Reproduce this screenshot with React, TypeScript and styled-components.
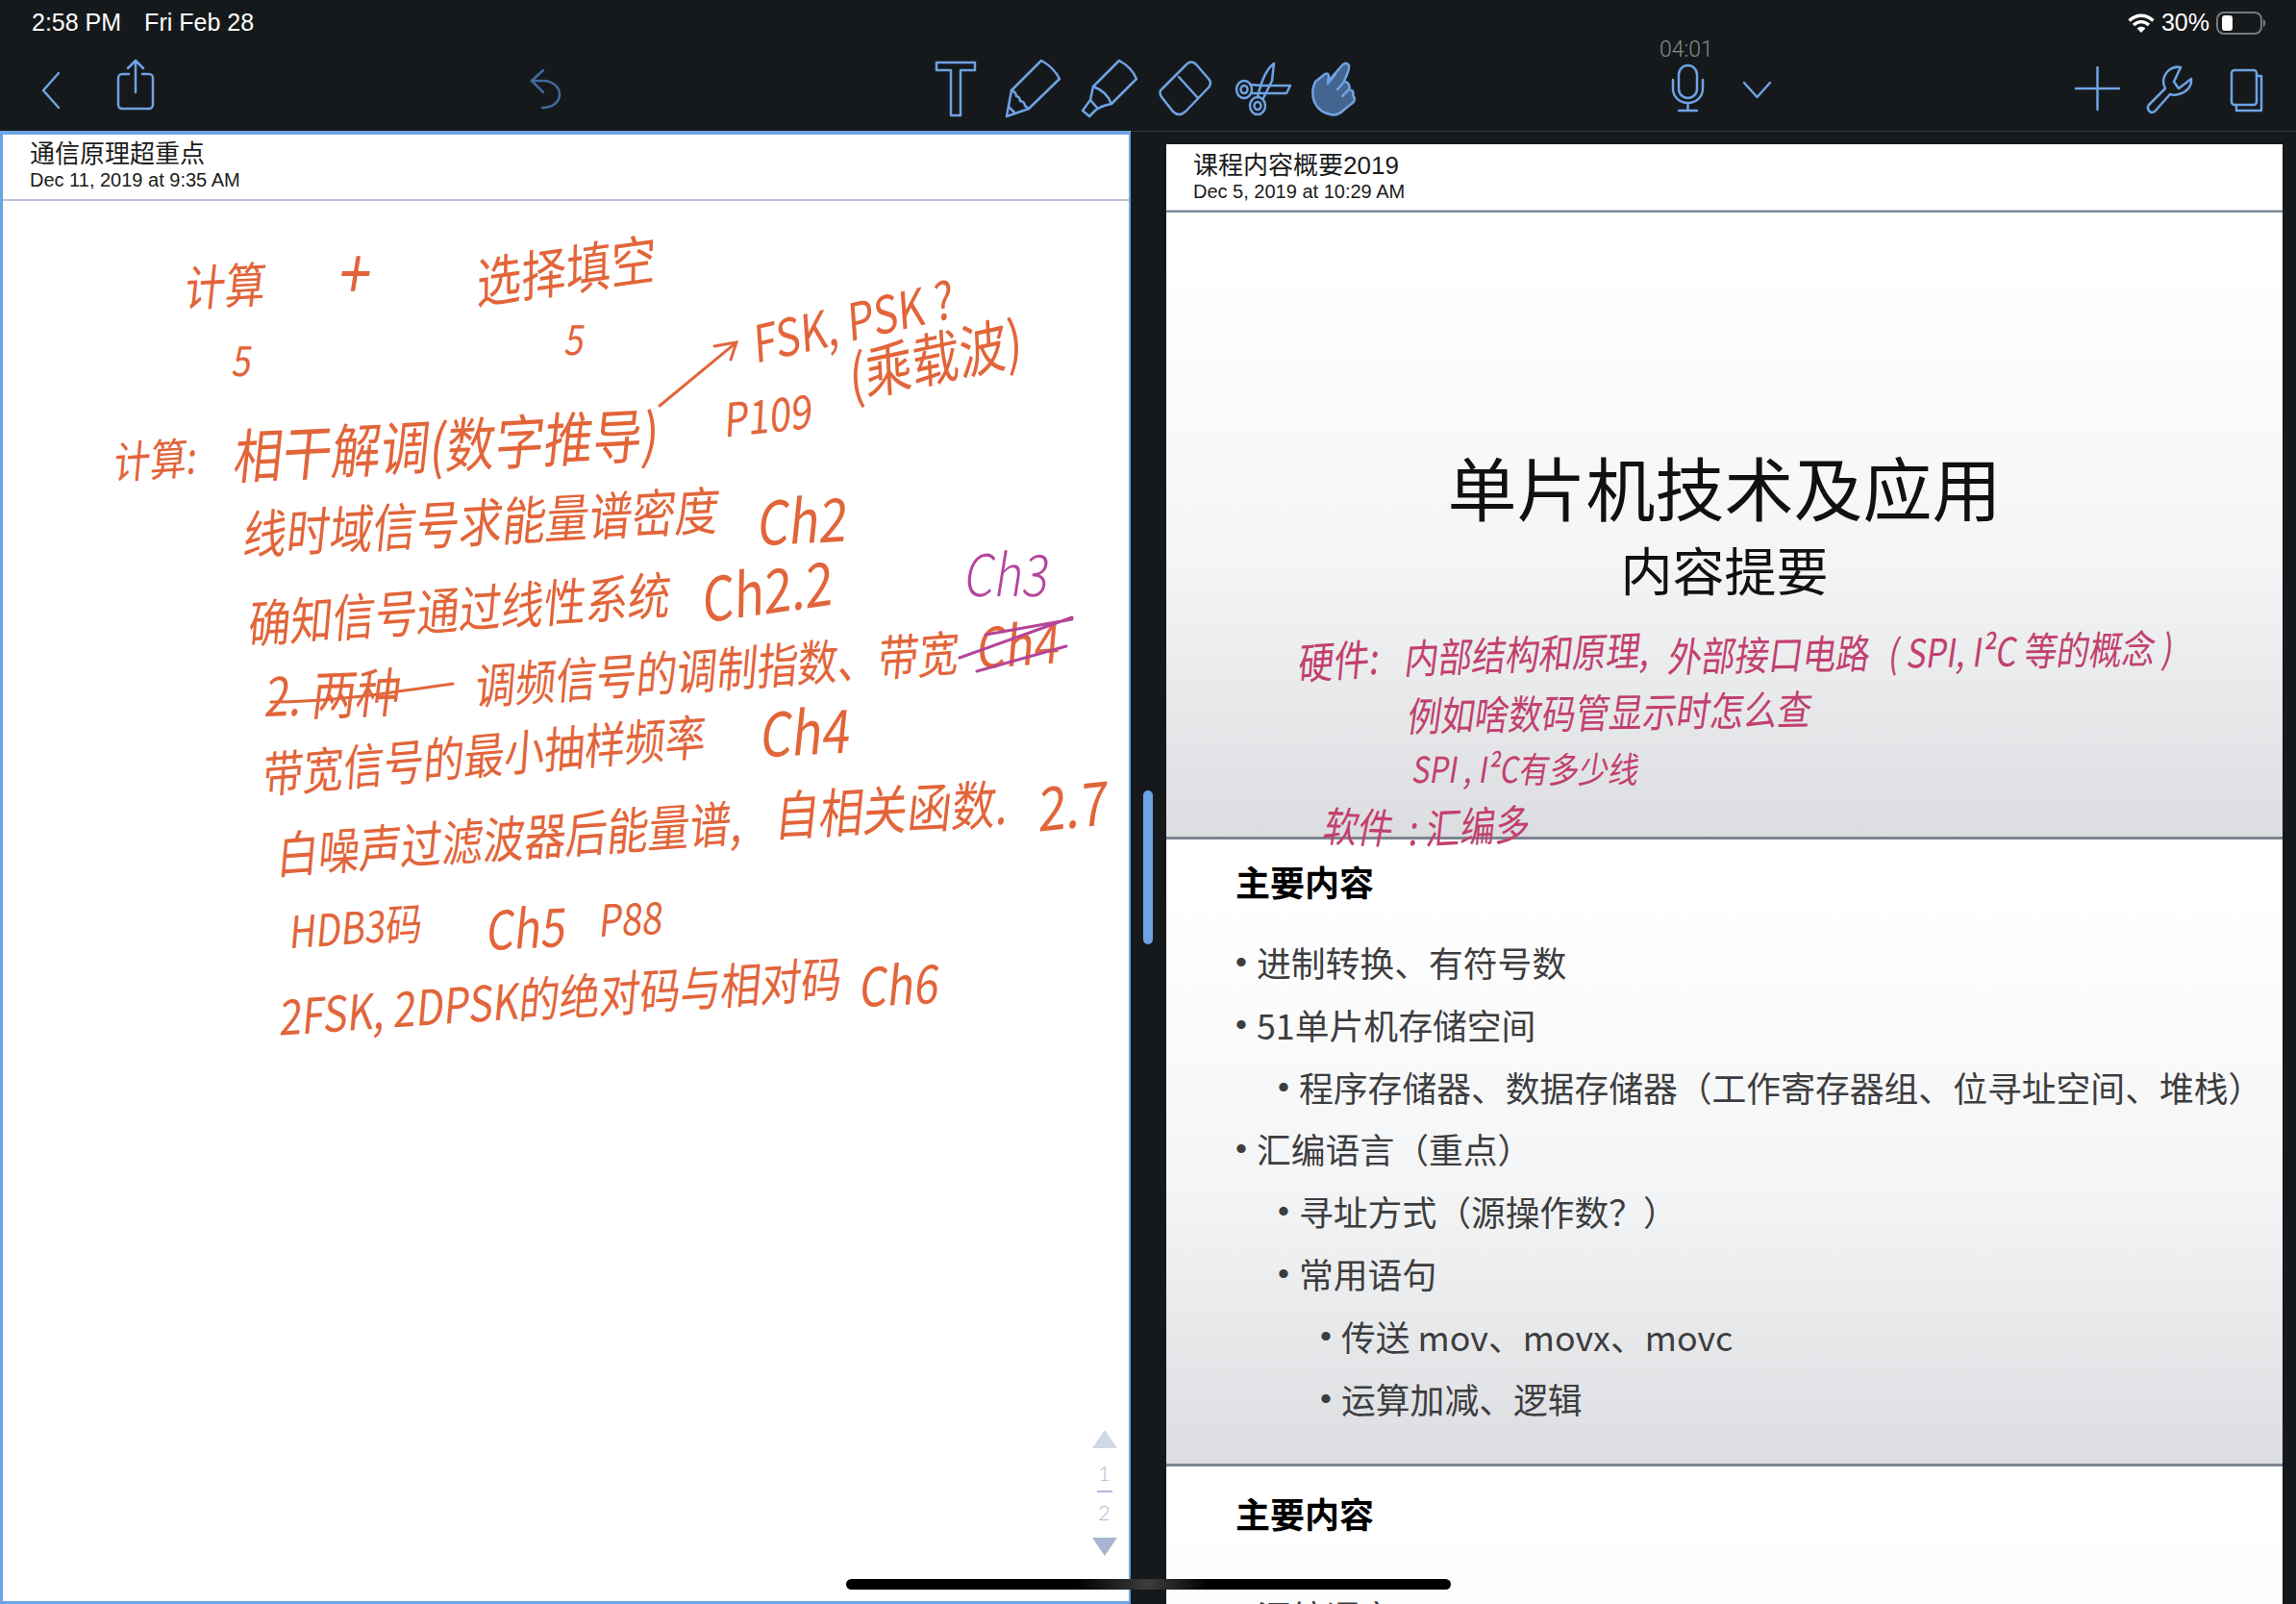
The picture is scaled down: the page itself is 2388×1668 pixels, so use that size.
import React from 'react';
import styled, { createGlobalStyle } from 'styled-components';

const BLUE = '#6ea3e4';
const INK_ORANGE = '#e2653a';
const INK_PINK = '#c2406e';
const INK_PURPLE = '#b4459a';

const LEFT_ORIGIN = { x: 3, y: 140 };
const RIGHT_ORIGIN = { x: 1213, y: 150 };

interface InkItem {
  text: string;
  x: number;
  y: number;
  size: number;
  rot: number;
  color?: string;
  thin?: boolean;
}

const LEFT_INK: InkItem[] = [
  { text: '计算', x: 193, y: 297, size: 42, rot: -3 },
  { text: '+', x: 354, y: 280, size: 60, rot: 0 },
  { text: '选择填空', x: 496, y: 291, size: 47, rot: -8 },
  { text: '5', x: 243, y: 372, size: 36, rot: 0 },
  { text: '5', x: 589, y: 350, size: 36, rot: 0 },
  { text: 'FSK, PSK ?', x: 784, y: 355, size: 44, rot: -13 },
  { text: '(乘载波)', x: 883, y: 388, size: 50, rot: -12 },
  { text: '计算:', x: 119, y: 479, size: 38, rot: -4 },
  { text: '相干解调(数字推导)', x: 244, y: 472, size: 51, rot: -3 },
  { text: 'P109', x: 754, y: 434, size: 40, rot: -6 },
  { text: '线时域信号求能量谱密度', x: 254, y: 553, size: 45, rot: -3 },
  { text: 'Ch2', x: 789, y: 541, size: 52, rot: -3 },
  { text: '确知信号通过线性系统', x: 259, y: 646, size: 44, rot: -4 },
  { text: 'Ch2.2', x: 731, y: 621, size: 52, rot: -8 },
  { text: 'Ch3', x: 1005, y: 594, size: 50, rot: 0, color: INK_PURPLE, thin: true },
  { text: '2. 两种', x: 277, y: 721, size: 46, rot: -2 },
  { text: '调频信号的调制指数、带宽', x: 495, y: 711, size: 42, rot: -4 },
  { text: 'Ch4', x: 1017, y: 670, size: 48, rot: -4 },
  { text: '带宽信号的最小抽样频率', x: 274, y: 803, size: 42, rot: -5 },
  { text: 'Ch4', x: 792, y: 761, size: 52, rot: -3 },
  { text: '白噪声过滤波器后能量谱,', x: 289, y: 886, size: 43, rot: -4 },
  { text: '自相关函数.', x: 807, y: 845, size: 46, rot: -3 },
  { text: '2.7', x: 1081, y: 838, size: 52, rot: -6 },
  { text: 'HDB3码', x: 302, y: 967, size: 38, rot: -4 },
  { text: 'Ch5', x: 507, y: 964, size: 46, rot: -3 },
  { text: 'P88', x: 624, y: 955, size: 38, rot: -3 },
  { text: '2FSK, 2DPSK的绝对码与相对码', x: 292, y: 1055, size: 42, rot: -4 },
  { text: 'Ch6', x: 895, y: 1023, size: 46, rot: -3 },
];

const RIGHT_INK: InkItem[] = [
  { text: '硬件:', x: 1351, y: 688, size: 37, rot: -4, color: INK_PINK },
  { text: '内部结构和原理,', x: 1462, y: 682, size: 35, rot: -2, color: INK_PINK },
  { text: '外部接口电路', x: 1736, y: 680, size: 35, rot: -1, color: INK_PINK },
  { text: '( SPI, I²C 等的概念 )', x: 1965, y: 678, size: 34, rot: -1, color: INK_PINK },
  { text: '例如啥数码管显示时怎么查', x: 1465, y: 742, size: 35, rot: -1, color: INK_PINK },
  { text: 'SPI , I²C有多少线', x: 1470, y: 798, size: 31, rot: 0, color: INK_PINK },
  { text: '软件', x: 1378, y: 856, size: 36, rot: 2, color: INK_PINK },
  { text: ': 汇编多', x: 1466, y: 860, size: 36, rot: -3, color: INK_PINK },
];

const GlobalStyle = createGlobalStyle`
  html, body {
    margin: 0;
    width: 2388px;
    height: 1668px;
    overflow: hidden;
    background: #16191b;
    font-family: "Liberation Sans", "Noto Sans CJK SC", sans-serif;
  }
`;

const Screen = styled.div`
  position: relative;
  display: flex;
  flex-direction: column;
  width: 2388px;
  height: 1668px;
  overflow: hidden;
  background: #16191b;
`;

const TopBar = styled.header`
  flex: none;
  height: 136px;
`;

const StatusBar = styled.div`
  display: flex;
  justify-content: space-between;
  height: 62px;
  padding: 8px 30px 0 33px;
  box-sizing: border-box;
  color: #fff;
  font-size: 25px;
  line-height: 30px;
`;

const StatusGroup = styled.div<{ $gap: number }>`
  display: flex;
  align-items: flex-start;
  gap: ${({ $gap }) => $gap}px;
`;

const StatusIcon = styled.svg`
  display: block;
  margin-top: 4px;
`;

const Toolbar = styled.div`
  display: flex;
  height: 60px;
  padding-left: 43px;
`;

const ToolIcon = styled.svg<{ $gap?: number; $dim?: boolean }>`
  display: block;
  flex: none;
  height: 60px;
  margin-left: ${({ $gap }) => $gap ?? 0}px;
  overflow: visible;
  fill: none;
  stroke: ${({ $dim }) => ($dim ? '#3f6a9e' : BLUE)};
  stroke-width: 2.5;
  stroke-linecap: round;
  stroke-linejoin: round;
`;

const Recorder = styled.div`
  position: relative;
  display: flex;
  flex: none;
  margin-left: 329px;
`;

const Timer = styled.span`
  position: absolute;
  top: -23px;
  left: -13px;
  color: #85898c;
  font-family: Roboto, sans-serif;
  font-size: 23px;
  font-weight: 300;
  line-height: 26px;
`;

const Split = styled.main`
  display: flex;
  flex: 1;
  min-height: 0;
`;

const NotePage = styled.section`
  position: relative;
  flex: none;
  width: 1176px;
  box-sizing: border-box;
  border: solid ${BLUE};
  border-width: 4px 2px 3px 3px;
  background: #fff;
`;

const NoteHeader = styled.div<{ $height: number; $pad: number; $dark?: boolean }>`
  height: ${({ $height }) => $height}px;
  box-sizing: border-box;
  padding: ${({ $pad }) => $pad}px 0 0 28px;
  color: #1b1b1b;
  border-bottom: 2px solid ${({ $dark }) => ($dark ? '#7f8a96' : '#b9c4da')};
  box-shadow: ${({ $dark }) => ($dark ? 'inset 0 -1px 0 #b9c8de' : 'none')};
  background: #fff;
`;

const NoteTitle = styled.div`
  font-size: 26px;
  line-height: 34px;
`;

const NoteDate = styled.div`
  margin-top: -2px;
  font-size: 20px;
  line-height: 24px;
`;

const InkLayer = styled.div`
  position: absolute;
  inset: 0;
  pointer-events: none;
`;

const Ink = styled.span<{ $x: number; $y: number; $size: number; $rot: number; $color: string; $thin?: boolean }>`
  position: absolute;
  left: ${({ $x }) => $x}px;
  top: ${({ $y }) => $y}px;
  color: ${({ $color }) => $color};
  font-family: "Noto Sans CJK SC", sans-serif;
  font-size: ${({ $size }) => $size}px;
  font-weight: ${({ $thin }) => ($thin ? 300 : 400)};
  line-height: 1;
  white-space: nowrap;
  transform-origin: left center;
  transform: translateY(-50%) rotate(${({ $rot }) => $rot}deg) skewX(-9deg) scaleY(1.2);
`;

const InkStrokes = styled.svg`
  position: absolute;
  inset: 0;
  width: 100%;
  height: 100%;
  fill: none;
  stroke-linecap: round;
`;

const Pager = styled.div`
  position: absolute;
  right: 12px;
  bottom: 47px;
  display: flex;
  flex-direction: column;
  align-items: center;
  width: 27px;
`;

const Arrow = styled.div<{ $down?: boolean }>`
  width: 0;
  height: 0;
  margin-top: ${({ $down }) => ($down ? '14px' : '0')};
  border-left: 13.5px solid transparent;
  border-right: 13.5px solid transparent;
  border-bottom: ${({ $down }) => ($down ? '0' : '19px solid #cfd8e6')};
  border-top: ${({ $down }) => ($down ? '19px solid #a6b5d0' : '0')};
`;

const PagerNumber = styled.div<{ $top: number }>`
  margin-top: ${({ $top }) => $top}px;
  color: #aebcd6;
  font-family: Lato, sans-serif;
  font-size: 22px;
  font-weight: 300;
  line-height: 24px;
`;

const PagerRule = styled.div`
  width: 16px;
  height: 2px;
  margin-top: 6px;
  background: #aebcd6;
`;

const Gutter = styled.div`
  position: relative;
  flex: none;
  width: 37px;
  border-top: 1px solid #3a3d3f;
`;

const Handle = styled.div`
  position: absolute;
  top: 685px;
  left: 13px;
  width: 10px;
  height: 160px;
  border-radius: 5px;
  background: ${BLUE};
`;

const DocColumn = styled.div`
  flex: 1;
  min-width: 0;
  border-top: 1px solid #3a3d3f;
  padding: 13px 14px 0 0;
`;

const DocPage = styled.section`
  position: relative;
  background: #fff;
`;

const Slide = styled.article`
  box-sizing: border-box;
  height: 652px;
  border-bottom: 3px solid #7d8490;
  background: linear-gradient(180deg, #fff 0%, #fff 8%, #f4f5f6 55%, #dcdde0 100%);
`;

const Cover = styled(Slide)`
  padding-top: 238px;
  text-align: center;
  color: #111;
`;

const CoverTitle = styled.h1`
  margin: 0;
  font-family: "Noto Sans CJK SC", sans-serif;
  font-size: 72px;
  font-weight: 400;
  line-height: 92px;
`;

const CoverSubtitle = styled.h2`
  margin: 8px 0 0;
  font-family: "Noto Sans CJK SC", sans-serif;
  font-size: 54px;
  font-weight: 400;
  line-height: 66px;
`;

const ContentSlide = styled(Slide)<{ $top: number }>`
  padding: ${({ $top }) => $top}px 0 0 72px;
`;

const SlideTitle = styled.h3<{ $gap: number }>`
  margin: 0 0 ${({ $gap }) => $gap}px;
  color: #000;
  font-family: "Noto Sans CJK SC", sans-serif;
  font-size: 36px;
  font-weight: 700;
  line-height: 50px;
`;

const Bullet = styled.div<{ $level: number }>`
  display: flex;
  height: 64.8px;
  margin-left: ${({ $level }) => $level * 44}px;
  color: #3d3d3f;
  font-family: "Noto Sans CJK SC", sans-serif;
  font-size: 35.8px;
  line-height: 64.8px;
  white-space: nowrap;
  &::before {
    content: '•';
    flex: none;
    width: 22px;
    font-family: "Liberation Sans", sans-serif;
    font-size: 34px;
  }
`;

const HomeBar = styled.div`
  position: absolute;
  left: 880px;
  top: 1642px;
  width: 629px;
  height: 11px;
  border-radius: 6px;
  background: linear-gradient(90deg, #000 0%, #000 38%, #3c3c3c 50%, #000 60%, #000 100%);
`;

const InkList: React.FC<{ items: InkItem[]; origin: { x: number; y: number } }> = ({ items, origin }) => (
  <InkLayer>
    {items.map((item) => (
      <Ink
        key={`${item.text}-${item.x}`}
        $x={item.x - origin.x}
        $y={item.y - origin.y}
        $size={item.size}
        $rot={item.rot}
        $color={item.color ?? INK_ORANGE}
        $thin={item.thin}
      >
        {item.text}
      </Ink>
    ))}
  </InkLayer>
);

const App: React.FC = () => (
  <Screen>
    <GlobalStyle />
    <TopBar>
      <StatusBar>
        <StatusGroup $gap={24}>
          <span>2:58 PM</span>
          <span>Fri Feb 28</span>
        </StatusGroup>
        <StatusGroup $gap={7}>
          <StatusIcon width="28" height="24" viewBox="0 0 28 24">
            <g fill="none" stroke="#fff" strokeWidth="3.4">
              <path d="M1.500 9.500C9 2.500 19 2.500 26.500 9.500" />
              <path d="M6 14C11 9.500 17 9.500 22 14" />
            </g>
            <path d="M14 22 9.600 17.400C12 15.200 16 15.200 18.400 17.400Z" fill="#fff" />
          </StatusIcon>
          <span>30%</span>
          <StatusIcon width="53" height="24" viewBox="0 0 53 24">
            <rect x="1" y="1" width="46" height="22" rx="7" fill="none" stroke="#77797b" strokeWidth="2" />
            <rect x="6" y="4" width="11" height="16" rx="3" fill="#fff" />
            <path d="M49 8c3 .8 3 7.200 0 8z" fill="#77797b" />
          </StatusIcon>
        </StatusGroup>
      </StatusBar>
      <Toolbar>
        <ToolIcon width="20" viewBox="0 0 20 60">
          <path d="M18 14 2 32l16 18" />
        </ToolIcon>
        <ToolIcon width="38" viewBox="0 0 38 60" $gap={59}>
          <path d="M12 15H5a4 4 0 0 0-4 4v28a4 4 0 0 0 4 4h28a4 4 0 0 0 4-4V19a4 4 0 0 0-4-4h-7" />
          <path d="M19 34V1M11 9l8-8 8 8" />
        </ToolIcon>
        <ToolIcon width="32" viewBox="0 0 32 60" $gap={391} $dim>
          <path d="M14 11 2 22l12 12" />
          <path d="M2 22h12c10 0 17 7 17 14 0 8-7 14-18 14" />
        </ToolIcon>
        <ToolIcon width="42" viewBox="0 0 42 60" $gap={390}>
          <path d="M1 3h40v8H26v47H16V11H1z" />
        </ToolIcon>
        <ToolIcon width="57" viewBox="0 0 57 60" $gap={31}>
          <path d="M6 32 37 1q13 7 19 19L24 51 1 59z" />
          <path d="M6 32q5 2 5 6 4 1 4 5 5 1 5 5l4 3M3 49l6 6" />
        </ToolIcon>
        <ToolIcon width="58" viewBox="0 0 58 60" $gap={22}>
          <path d="M12 28 39 1q13 7 18 19L31 46q-11 2-17 7l-6 6-7-6 8-11z" />
          <path d="M12 28q14 5 19 18M9 42l7 8" />
        </ToolIcon>
        <ToolIcon width="56" viewBox="0 0 56 60" $gap={22}>
          <path d="M28 6q6-7 12 0l12 14q4 4 0 9L28 54q-7 6-13 0L4 40q-5-6 0-10z" />
          <path d="m21 18 20 22" />
        </ToolIcon>
        <ToolIcon width="57" viewBox="0 0 57 60" $gap={24}>
          <ellipse cx="9" cy="31" rx="8" ry="9" />
          <ellipse cx="9" cy="31" rx="3.500" ry="4" />
          <ellipse cx="23" cy="48" rx="8" ry="9" />
          <ellipse cx="23" cy="48" rx="3.500" ry="4" />
          <path d="M40 4q-11 8-17 35M40 4l-2 18-9 18" />
          <path d="M57 27H28l-12-1M57 27l-4 8H30l-13 0" />
        </ToolIcon>
        <ToolIcon width="46" viewBox="0 0 46 60" $gap={22}>
          <path
            d="M31 7q5-6 8-1 1 4-5 16l2 1q5 3 3 8 6 1 4 6 3 3 1 7l-10 8q-7 7-14 5-12-2-17-13-4-11 1-21l10-8q4-2 4 3l-1 5z"
            fill="#44658f"
          />
          <path d="m25 15-8 10M34 23l-7 8M39 31l-7 7" />
        </ToolIcon>
        <Recorder>
          <Timer>04:01</Timer>
          <ToolIcon width="33" viewBox="0 0 33 60">
            <rect x="7" y="6" width="19" height="34" rx="9.500" />
            <path d="M1 21v9c0 9 7 15 15.500 15S32 39 32 30v-9M16.500 45v8M7 53h19" />
          </ToolIcon>
        </Recorder>
        <ToolIcon width="29" viewBox="0 0 29 60" $gap={41}>
          <path d="M1 24 14.500 39 28 24" />
        </ToolIcon>
        <ToolIcon width="45" viewBox="0 0 45 60" $gap={317}>
          <path d="M22.500 8v44M0 30h45" />
        </ToolIcon>
        <ToolIcon width="49" viewBox="0 0 49 60" $gap={28}>
          <path d="M36 8c-9-2-17 5-18 14 0 4 1 6 2 8L3 47c-3 4 1 10 6 7l16-18c3 1 6 1 9 0 8-2 14-8 13-16L34 30l-5-7z" />
        </ToolIcon>
        <ToolIcon width="33" viewBox="0 0 33 60" $gap={39}>
          <rect x="1" y="11" width="26" height="36" rx="3" />
          <path d="M27 17h5v36H6v-6" />
        </ToolIcon>
      </Toolbar>
    </TopBar>
    <Split>
      <NotePage>
        <NoteHeader $height={69} $pad={3}>
          <NoteTitle>通信原理超重点</NoteTitle>
          <NoteDate>Dec 11, 2019 at 9:35 AM</NoteDate>
        </NoteHeader>
        <InkList items={LEFT_INK} origin={LEFT_ORIGIN} />
        <InkStrokes viewBox="3 140 1171 1525" preserveAspectRatio="xMinYMin">
          <g stroke={INK_ORANGE} strokeWidth="3">
            <path d="M686 422 766 356M743 360l23-4-6 18" />
            <path d="M282 730C350 730 420 718 471 711" />
          </g>
          <g stroke={INK_PURPLE} strokeWidth="3">
            <path d="M998 684 1115 642M1016 698 1109 672M1025 660 1115 644" />
          </g>
        </InkStrokes>
        <Pager>
          <Arrow />
          <PagerNumber $top={14}>1</PagerNumber>
          <PagerRule />
          <PagerNumber $top={9}>2</PagerNumber>
          <Arrow $down />
        </Pager>
      </NotePage>
      <Gutter>
        <Handle />
      </Gutter>
      <DocColumn>
        <DocPage>
          <NoteHeader $height={71} $pad={5} $dark>
            <NoteTitle>课程内容概要2019</NoteTitle>
            <NoteDate>Dec 5, 2019 at 10:29 AM</NoteDate>
          </NoteHeader>
          <Cover>
            <CoverTitle>单片机技术及应用</CoverTitle>
            <CoverSubtitle>内容提要</CoverSubtitle>
          </Cover>
          <ContentSlide $top={18}>
            <SlideTitle $gap={27}>主要内容</SlideTitle>
            <Bullet $level={0}>进制转换、有符号数</Bullet>
            <Bullet $level={0}>51单片机存储空间</Bullet>
            <Bullet $level={1}>程序存储器、数据存储器（工作寄存器组、位寻址空间、堆栈）</Bullet>
            <Bullet $level={0}>汇编语言（重点）</Bullet>
            <Bullet $level={1}>寻址方式（源操作数？）</Bullet>
            <Bullet $level={1}>常用语句</Bullet>
            <Bullet $level={2}>传送 mov、movx、movc</Bullet>
            <Bullet $level={2}>运算加减、逻辑</Bullet>
          </ContentSlide>
          <ContentSlide $top={23}>
            <SlideTitle $gap={50}>主要内容</SlideTitle>
            <Bullet $level={0}>汇编语言</Bullet>
          </ContentSlide>
          <InkList items={RIGHT_INK} origin={RIGHT_ORIGIN} />
        </DocPage>
      </DocColumn>
    </Split>
    <HomeBar />
  </Screen>
);

export default App;
